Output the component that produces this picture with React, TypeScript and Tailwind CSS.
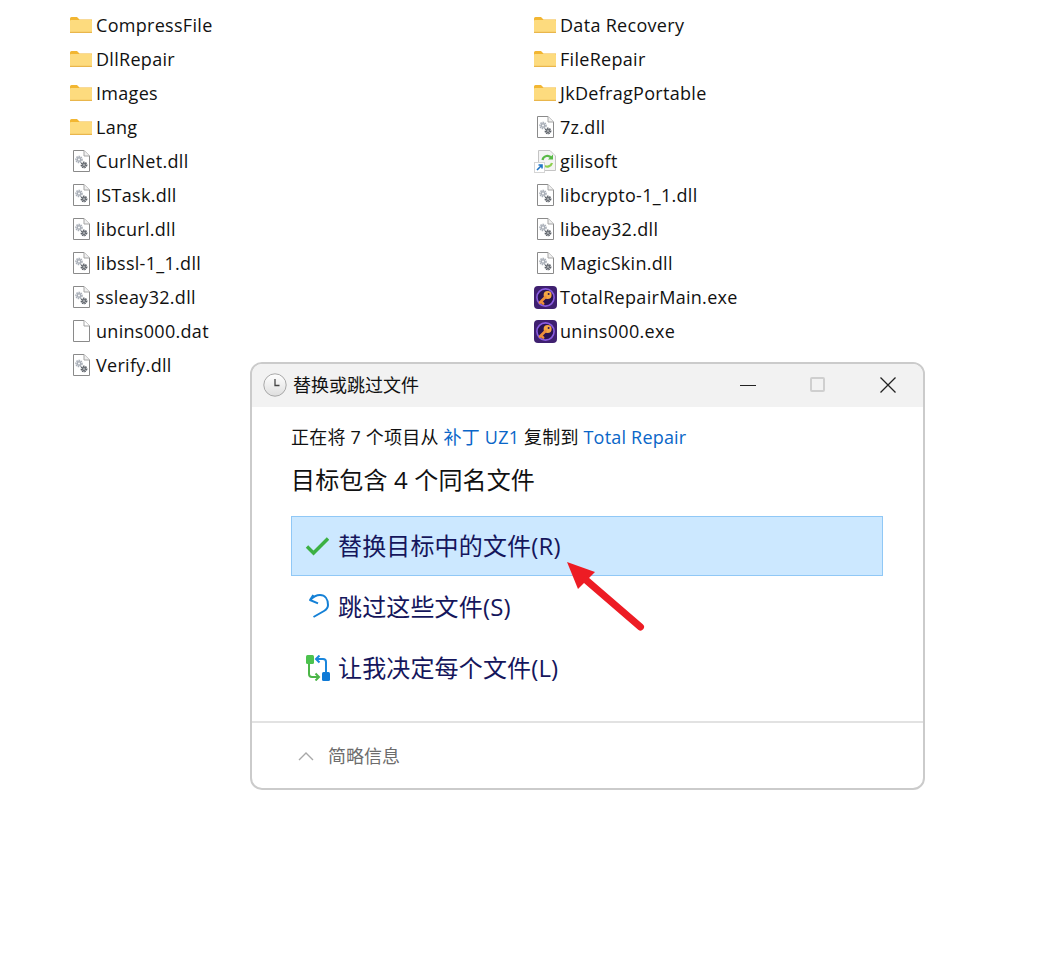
const latin = "font-['Open_Sans','Noto_Sans_CJK_SC',sans-serif]";

function FolderIcon() {
  return (
    <svg width="22" height="18" viewBox="0 0 22 18" className="shrink-0">
      <path d="M0 2.5Q0 1 1.5 1H7l2.5 2.5H22V6H0Z" fill="#f2b632" />
      <rect x="0" y="4" width="22" height="13" rx="1" fill="#fddb7e" />
      <rect x="0" y="15.8" width="22" height="1.2" fill="#e9b64c" />
    </svg>
  );
}

function Gear({ cx, cy, r, color }: { cx: number; cy: number; r: number; color: string }) {
  return (
    <>
      <circle cx={cx} cy={cy} r={r + 0.6} fill="none" stroke={color} strokeWidth="1.6" strokeDasharray="1.5 .7" />
      <circle cx={cx} cy={cy} r={r} fill={color} />
      <circle cx={cx} cy={cy} r={r * 0.4} fill="#fff" />
    </>
  );
}

function GearFileIcon() {
  return (
    <svg width="18" height="22" viewBox="0 0 18 22" className="shrink-0">
      <path d="M1.5.5H12L17.5 6V21.5H1.5Z" fill="#fff" stroke="#8a8a8a" />
      <path d="M12 .5V6H17.5" fill="#f0f0f0" stroke="#a5a5a5" />
      <Gear cx={7} cy={9.5} r={2.4} color="#a9afb8" />
      <Gear cx={12} cy={15} r={2} color="#5c6168" />
    </svg>
  );
}

function BlankFileIcon() {
  return (
    <svg width="18" height="22" viewBox="0 0 18 22" className="shrink-0">
      <path d="M1.5.5H12L17.5 6V21.5H1.5Z" fill="#fff" stroke="#8a8a8a" />
      <path d="M12 .5V6H17.5" fill="#fff" stroke="#a5a5a5" />
    </svg>
  );
}

function ShortcutIcon() {
  return (
    <svg width="24" height="24" viewBox="0 0 24 24" className="shrink-0">
      <path d="M4.5 1.5H16L21.5 7V21.5H4.5Z" fill="#f4f4f4" stroke="#c4c4c4" />
      <path d="M8.5 11a5 5 0 0 1 9-2" fill="none" stroke="#58b947" strokeWidth="2.2" />
      <path d="M19 5.5V10.5H14Z" fill="#58b947" />
      <path d="M18 14a5 5 0 0 1-8 2.5" fill="none" stroke="#8ccf4d" strokeWidth="2.2" />
      <rect x="0.5" y="13.5" width="10" height="10" fill="#fff" stroke="#d5d5d5" />
      <path d="M3 21 7.5 16.5M4.5 16H8V19.5" fill="none" stroke="#1f74c4" strokeWidth="1.6" />
    </svg>
  );
}

function KeyAppIcon() {
  return (
    <svg width="23" height="23" viewBox="0 0 23 23" className="shrink-0">
      <rect width="23" height="23" rx="4" fill="#3f2070" />
      <circle cx="11.5" cy="11.5" r="8.6" fill="#2a1352" stroke="#8a5ce0" strokeWidth="1.6" />
      <circle cx="13.6" cy="9" r="4" fill="#f4a644" />
      <path d="M11.5 11 6 16.5M7 15.5 9.2 17.7" stroke="#ee8f3a" strokeWidth="2.6" fill="none" strokeLinecap="round" />
      <circle cx="14.6" cy="8" r="1" fill="#2a1352" />
    </svg>
  );
}

type Kind = "folder" | "gear" | "blank" | "shortcut" | "key";

const icons: Record<Kind, React.ReactNode> = {
  folder: <FolderIcon />,
  gear: <GearFileIcon />,
  blank: <BlankFileIcon />,
  shortcut: <ShortcutIcon />,
  key: <KeyAppIcon />,
};

const rows: [string, Kind, string, Kind][] = [
  ["CompressFile", "folder", "Data Recovery", "folder"],
  ["DllRepair", "folder", "FileRepair", "folder"],
  ["Images", "folder", "JkDefragPortable", "folder"],
  ["Lang", "folder", "7z.dll", "gear"],
  ["CurlNet.dll", "gear", "gilisoft", "shortcut"],
  ["ISTask.dll", "gear", "libcrypto-1_1.dll", "gear"],
  ["libcurl.dll", "gear", "libeay32.dll", "gear"],
  ["libssl-1_1.dll", "gear", "MagicSkin.dll", "gear"],
  ["ssleay32.dll", "gear", "TotalRepairMain.exe", "key"],
  ["unins000.dat", "blank", "unins000.exe", "key"],
  ["Verify.dll", "gear", "", "blank"],
];

function FileItem({ name, kind }: { name: string; kind: Kind }) {
  return (
    <div className="flex h-[34px] items-center">
      <span className="flex w-[26px] shrink-0 items-center justify-start">
        {kind === "folder" || kind === "key" || kind === "shortcut" ? (
          icons[kind]
        ) : (
          <span className="ml-[2px] flex">{icons[kind]}</span>
        )}
      </span>
      <span className="text-[18px] leading-none tracking-[0.3px] text-[#111]">{name}</span>
    </div>
  );
}

function ClockIcon() {
  return (
    <svg width="24" height="24" viewBox="0 0 24 24" className="shrink-0">
      <defs>
        <linearGradient id="clk" x1="0" y1="0" x2="0" y2="1">
          <stop offset="0" stopColor="#ffffff" />
          <stop offset="1" stopColor="#dedede" />
        </linearGradient>
      </defs>
      <circle cx="12" cy="12" r="11.2" fill="url(#clk)" stroke="#a8a8a8" />
      <path d="M12 6V12.5H16.5" fill="none" stroke="#444" strokeWidth="1.3" />
    </svg>
  );
}

function Option({ icon, label, active }: { icon: React.ReactNode; label: string; active?: boolean }) {
  return (
    <div
      className={`flex h-[60px] items-center border pl-[13px] ${
        active ? "border-[#90c8f6] bg-[#cce8ff]" : "border-transparent"
      }`}
    >
      <span className="flex w-[33px] shrink-0 items-center">{icon}</span>
      <span className="text-[24px] leading-none tracking-[0.15px] text-[#15165c]">{label}</span>
    </div>
  );
}

function Dialog() {
  return (
    <div className="absolute left-[250px] top-[362px] flex h-[428px] w-[675px] flex-col overflow-hidden rounded-[12px] border-2 border-[#cbcbcb] bg-white">
      <div className="flex h-[43px] shrink-0 items-center bg-[#f2f2f2] pb-[2px] pl-[11px]">
        <ClockIcon />
        <span className="ml-[6px] text-[18px] leading-none text-[#111]">替换或跳过文件</span>
        <div className="ml-auto flex items-center">
          <svg width="16" height="16" viewBox="0 0 16 16" className="mr-[54px]">
            <path d="M0 8.5H16" stroke="#222" strokeWidth="1" />
          </svg>
          <span className="mr-[55px] h-[15px] w-[15px] rounded-[2px] border-2 border-[#cfcfcf]" />
          <svg width="16" height="16" viewBox="0 0 16 16" className="mr-[27px]">
            <path d="M.5.5 15.5 15.5M15.5.5.5 15.5" stroke="#222" strokeWidth="1.3" />
          </svg>
        </div>
      </div>
      <div className="flex flex-1 flex-col pl-[39px] pr-[40px]">
        <p className="mt-[17px] text-[18px] leading-[26px] tracking-[0.2px] text-[#111]">
          正在将 7 个项目从 <span className="text-[#0a66c8]">补丁 UZ1</span> 复制到{" "}
          <span className="text-[#0a66c8]">Total Repair</span>
        </p>
        <p className="mt-[15px] text-[24px] leading-[30px] tracking-[0.15px] text-[#111]">目标包含 4 个同名文件</p>
        <div className="mt-[21px] flex flex-col gap-px">
          <Option
            active
            label="替换目标中的文件(R)"
            icon={
              <svg width="24" height="20" viewBox="0 0 24 20">
                <path d="M2 10.5 8.5 17 23 2.5" fill="none" stroke="#3cb043" strokeWidth="3.4" />
              </svg>
            }
          />
          <Option
            label="跳过这些文件(S)"
            icon={
              <svg width="26" height="26" viewBox="0 0 26 26">
                <path
                  d="M8.3 1 5 6 13 9.3M5 6C8 3 11 1 15 1C20 1 23 5 23 11C23 13.5 21.5 15.5 19 17L8.5 23"
                  fill="none"
                  stroke="#1480d6"
                  strokeWidth="2"
                  strokeLinejoin="round"
                />
              </svg>
            }
          />
          <Option
            label="让我决定每个文件(L)"
            icon={
              <svg width="25" height="26" viewBox="0 0 25 26">
                <rect x="1" y="0" width="8" height="9" rx="1.5" fill="#4cc24e" />
                <rect x="17" y="17" width="8" height="9" rx="1.5" fill="#0f7ad6" />
                <path d="M4 9V19Q4 22 7 22H13M10.5 18.5 14 22 10.5 25.5" fill="none" stroke="#4cb648" strokeWidth="2" />
                <path d="M21 17V7Q21 4 18 4H12M14.5 .5 11 4 14.5 7.5" fill="none" stroke="#1a86dc" strokeWidth="2" />
              </svg>
            }
          />
        </div>
      </div>
      <div className="flex h-[67px] shrink-0 items-center border-t-2 border-[#e2e2e2] pl-[46px]">
        <svg width="16" height="10" viewBox="0 0 16 10">
          <path d="M1 9 8 2 15 9" fill="none" stroke="#a8a8a8" strokeWidth="1.4" />
        </svg>
        <span className="ml-[14px] text-[18px] leading-none text-[#6d6d6d]">简略信息</span>
      </div>
    </div>
  );
}

function Arrow() {
  return (
    <svg width="90" height="80" viewBox="0 0 90 80" className="absolute left-[562px] top-[557px]">
      <path d="M5 5 33 15 16 32Z" fill="#ed1c24" />
      <path d="M24 23 78.5 70" stroke="#ed1c24" strokeWidth="7" strokeLinecap="round" />
    </svg>
  );
}

export default function App() {
  return (
    <div className={`relative h-[967px] w-[1049px] overflow-hidden bg-white ${latin}`}>
      <div className="grid grid-cols-[464px_1fr] pl-[70px] pt-[8px]">
        {rows.map((r) => (
          <div key={r[0]} className="contents">
            <FileItem name={r[0]} kind={r[1]} />
            {r[2] ? <FileItem name={r[2]} kind={r[3]} /> : <div />}
          </div>
        ))}
      </div>
      <Dialog />
      <Arrow />
    </div>
  );
}
